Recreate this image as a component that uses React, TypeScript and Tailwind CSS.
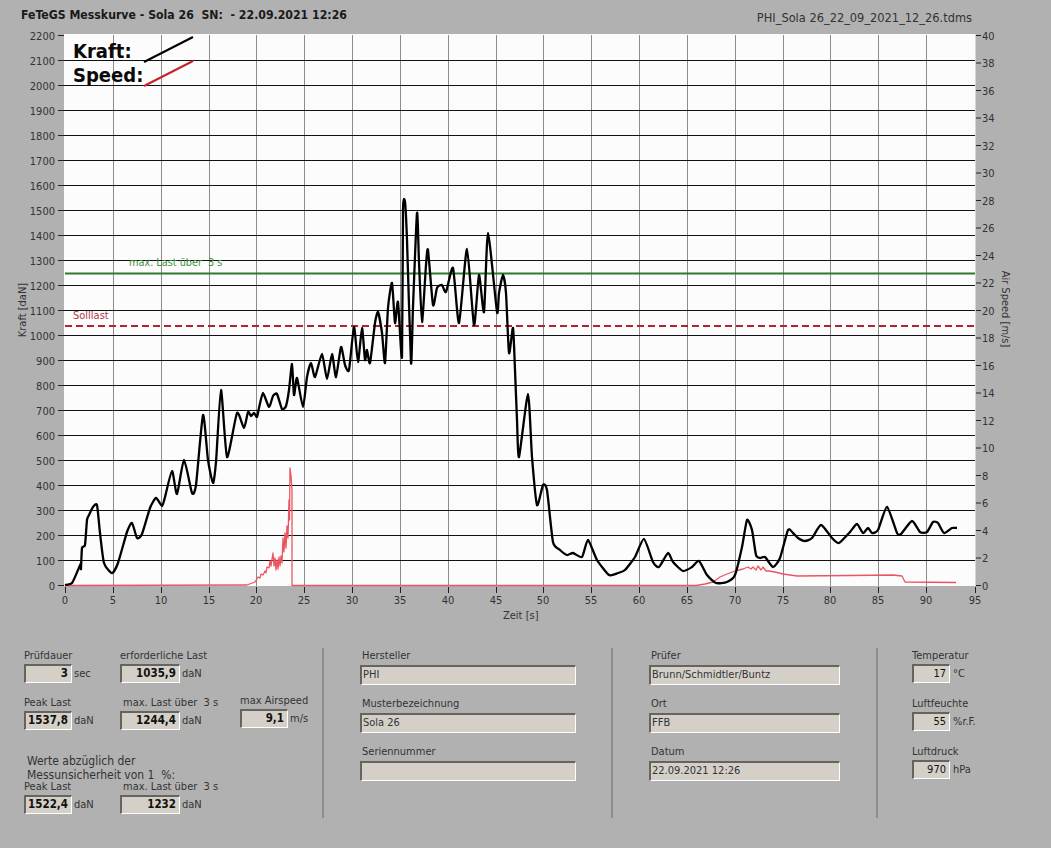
import React from 'react';

const X_GRID = [113, 161, 209, 256, 304, 352, 400, 448, 496, 543, 591, 639, 687, 735, 783, 830, 878, 926];
const X_TICKS = [65, ...X_GRID, 975];
const KRAFT = Array.from({ length: 23 }, (_, i) => i * 100);
const SPEED = Array.from({ length: 21 }, (_, i) => i * 2);

const forcePts =
  '65,585 72,583 78,570 81,563 81,569 82,548 85,545 87,520 89,515 93,507 97,505 100,533 104,563 112,573 118,563 127,532 132,523 137,538 142,534 150,508 156,498 162,506 165,497 172,471 177,494 184,460 192,493 196,485 203,415 208,460 213,483 216,462 221,390 227,457 237,413 244,428 248,412 251,416 254,413 257,417 259,408 263,393 269,407 273,396 277,394 282,409 286,406 289,390 292,364 294,395 297,378 303,407 307,377 311,363 315,377 322,354 327,379 332,354 336,377 341,347 345,365 349,370 354,327 358,362 362,328 365,360 367,350 370,363 375,323 378,312 382,333 385,363 388,308 392,283 395,323 398,302 402,357 403,210 405,202 407,240 411,363 413,307 417,213 419,262 422,322 426,265 428,250 433,305 437,288 442,285 446,292 453,268 459,323 467,249 474,325 479,275 484,312 488,233 497,312 499,293 503,275 506,293 509,353 513,328 515,370 517,420 519,457 528,394 532,457 537,505 543,485 547,490 553,542 560,550 567,555 573,553 582,557 588,540 597,560 609,575 618,573 625,570 635,557 644,539 653,562 659,567 668,553 673,562 683,571 692,567 699,561 707,575 716,583 727,582 735,575 742,547 747,520 752,530 756,555 760,558 765,557 773,567 780,558 788,530 793,533 798,538 805,541 812,538 821,525 832,538 839,543 850,532 857,524 863,533 868,528 872,533 878,530 887,507 897,533 901,534 912,521 920,532 927,532 933,522 938,523 944,533 952,528 957,528';

const airPts =
  '65,585.5 247,585 255,582 258,577 260,578 261,574 263,575 265,571 266,573 267,567 269,568 270,561 271,566 272,559 273,553 274,566 275,558 276,570 277,560 278,569 279,557 280,566 281,556 282,563 283,538 284,552 285,533 286,548 287,526 288,538 289,500 289.5,520 290,468 291,476 292,490 292,585.5 696,585.5 705,584 713,582 720,577 727,574 735,571 743,569 748,567 751,569 753,567 756,570 758,566 761,570 763,567 766,571 769,571 775,572 783,574 797,576 850,575.5 893,575 902,576 905,582 956,582.5';

// round the traced points off, the instrument curve has no hard corners
function smooth(raw: string) {
  const p = raw.split(' ').map((s) => s.split(',').map(Number));
  let d = `M${p[0][0]} ${p[0][1]}`;
  for (let i = 0; i < p.length - 1; i++) {
    const a = p[Math.max(i - 1, 0)];
    const b = p[i];
    const c = p[i + 1];
    const e = p[Math.min(i + 2, p.length - 1)];
    const k = 0.1;
    d += ` C${b[0] + (c[0] - a[0]) * k} ${b[1] + (c[1] - a[1]) * k} ${c[0] - (e[0] - b[0]) * k} ${c[1] - (e[1] - b[1]) * k} ${c[0]} ${c[1]}`;
  }
  return d;
}

// sunken LabVIEW style indicator
const boxCls = 'bg-[#d4d0c8] border-t-2 border-l-2 border-b border-r border-t-[#66645f] border-l-[#66645f] border-b-white border-r-white';

function Metric({ label, value, unit, bold, width, labelPad = '', gap = 'gap-[2px]' }: { label: string; value: string; unit: string; bold?: boolean; width: string; labelPad?: string; gap?: string }) {
  return (
    <div>
      <div className={`h-[16px] leading-[16px] whitespace-pre ${labelPad}`}>{label}</div>
      <div className={`flex items-center ${gap}`}>
        <div className={`${boxCls} ${width} h-[19px] flex items-center justify-end pr-[3px] text-[#111] ${bold ? 'font-bold text-[11.5px]' : ''}`}>{value}</div>
        <span className="pt-[2px]">{unit}</span>
      </div>
    </div>
  );
}

function TextField({ label, value }: { label: string; value: string }) {
  return (
    <div>
      <div className="h-[17px] leading-[15px] pl-[2px]">{label}</div>
      <div className={`${boxCls} h-[20px] flex items-center pl-[1px]`}>{value}</div>
    </div>
  );
}

function Chart() {
  return (
    <svg viewBox="0 28 1051 600" width={1051} height={600} className="block fill-[#333] text-[11px]">
      <rect x="64" y="34" width="911.5" height="552" fill="#fcfcfc" />
      {X_GRID.map((x) => (
        <line key={x} x1={x + 0.5} x2={x + 0.5} y1={35} y2={586} stroke="#8c8c8c" />
      ))}
      {KRAFT.map((v) => {
        const y = 585.5 - v / 4;
        return (
          <g key={v}>
            {v > 0 && v < 2200 && <line x1={64} x2={975} y1={y} y2={y} stroke="#111" />}
            <line x1={58} x2={64} y1={y} y2={y} stroke="#222" />
            <text x={55} y={y + 4} textAnchor="end">{v}</text>
          </g>
        );
      })}
      {SPEED.map((v) => {
        const y = 585.5 - v * 13.75;
        return (
          <g key={v}>
            <line x1={976} x2={981} y1={y} y2={y} stroke="#222" />
            <text x={982} y={y + 4}>{v}</text>
          </g>
        );
      })}
      {X_TICKS.map((x, i) => (
        <g key={x}>
          <line x1={x + 0.5} x2={x + 0.5} y1={587} y2={593} stroke="#222" />
          <text x={x} y={604} textAnchor="middle">{i * 5}</text>
        </g>
      ))}
      <text x={503} y={619}>Zeit [s]</text>
      <text transform="translate(26 310) rotate(-90)" textAnchor="middle">Kraft [daN]</text>
      <text transform="translate(1002 309) rotate(90)" textAnchor="middle">Air Speed [m/s]</text>

      <text x={73} y={58} className="text-[20px] font-bold fill-[#0a0a0a]">Kraft:</text>
      <text x={73} y={82} className="text-[20px] font-bold fill-[#0a0a0a]">Speed:</text>
      <line x1={144} y1={62} x2={193} y2={37} stroke="#000" strokeWidth={2} />
      <line x1={144} y1={86} x2={193} y2={61} stroke="#c8202c" strokeWidth={2} />

      <text x={129} y={266} className="fill-[#3f913f] whitespace-pre text-[10.8px]" xmlSpace="preserve">max. Last über  3 s</text>
      <line x1={65} x2={975} y1={273.5} y2={273.5} stroke="#2b7a2b" strokeWidth={2.2} />
      <text x={73} y={319} className="fill-[#b23a50]">Solllast</text>
      <line x1={65} x2={975} y1={326} y2={326} stroke="#b3202e" strokeWidth={2} strokeDasharray="7 4" />

      <polyline points={airPts} fill="none" stroke="#ea5560" strokeWidth={1.3} strokeLinejoin="round" />
      <path d={smooth(forcePts)} fill="none" stroke="#000" strokeWidth={2.3} strokeLinejoin="round" />
    </svg>
  );
}

export default function App() {
  return (
    <div className="w-[1051px] h-[848px] bg-[#b1b1b1] overflow-hidden text-[#333] text-[11px] font-['DejaVu_Sans_Condensed','DejaVu_Sans',sans-serif]">
      <div className="h-[28px] flex justify-between pl-[21px] pr-[79px]">
        <span className="pt-[7px] text-[12.2px] leading-[16px] font-bold text-[#1a1a1a] whitespace-pre">FeTeGS Messkurve - Sola 26  SN:  - 22.09.2021 12:26</span>
        <span className="pt-[10px] text-[12.7px] leading-[16px]">PHI_Sola 26_22_09_2021_12_26.tdms</span>
      </div>

      <Chart />

      <div className="flex pt-[20px] items-start">
        {/* Left: test values */}
        <div className="w-[322px] pl-[24px] flex flex-col">
          <div className="flex">
            <div className="w-[96px]"><Metric label="Prüfdauer" value="3" unit="sec" bold width="w-[48px]" /></div>
            <Metric label="erforderliche Last" value="1035,9" unit="daN" bold width="w-[60px]" />
          </div>
          <div className="flex mt-[12px]">
            <div className="w-[96px]"><Metric label="Peak Last" value="1537,8" unit="daN" bold width="w-[48px]" /></div>
            <div className="w-[120px]"><Metric label="max. Last über  3 s" labelPad="pl-[3px]" value="1244,4" unit="daN" bold width="w-[60px]" /></div>
            <div className="-mt-[2px]"><Metric label="max Airspeed" value="9,1" unit="m/s" bold width="w-[48px]" /></div>
          </div>
          <div className="mt-[24px] pl-[3px] text-[12px] leading-[14px]">
            <div>Werte abzüglich der</div>
            <div className="whitespace-pre">Messunsicherheit von 1  %:</div>
          </div>
          <div className="flex -mt-[3px]">
            <div className="w-[96px]"><Metric label="Peak Last" value="1522,4" unit="daN" bold width="w-[48px]" /></div>
            <Metric label="max. Last über  3 s" labelPad="pl-[3px]" value="1232" unit="daN" bold width="w-[60px]" />
          </div>
        </div>
        <div className="w-[2px] h-[170px] bg-[#8d8d8d]" />

        {/* Middle: manufacturer */}
        <div className="w-[287px] pl-[36px] pr-[35px] flex flex-col gap-[11px]">
          <TextField label="Hersteller" value="PHI" />
          <TextField label="Musterbezeichnung" value="Sola 26" />
          <TextField label="Seriennummer" value="" />
        </div>
        <div className="w-[2px] h-[170px] bg-[#8d8d8d]" />

        {/* Right: examiner */}
        <div className="w-[263px] pl-[36px] pr-[36px] flex flex-col gap-[11px]">
          <TextField label="Prüfer" value="Brunn/Schmidtler/Buntz" />
          <TextField label="Ort" value="FFB" />
          <TextField label="Datum" value="22.09.2021 12:26" />
        </div>
        <div className="w-[2px] h-[170px] bg-[#8d8d8d]" />

        {/* Ambient conditions */}
        <div className="pl-[34px] flex flex-col gap-[13px]">
          <Metric label="Temperatur" value="17" unit="°C" width="w-[38px]" gap="gap-[3px]" />
          <Metric label="Luftfeuchte" value="55" unit="%r.F." width="w-[38px]" gap="gap-[3px]" />
          <Metric label="Luftdruck" value="970" unit="hPa" width="w-[38px]" gap="gap-[3px]" />
        </div>
      </div>
    </div>
  );
}
